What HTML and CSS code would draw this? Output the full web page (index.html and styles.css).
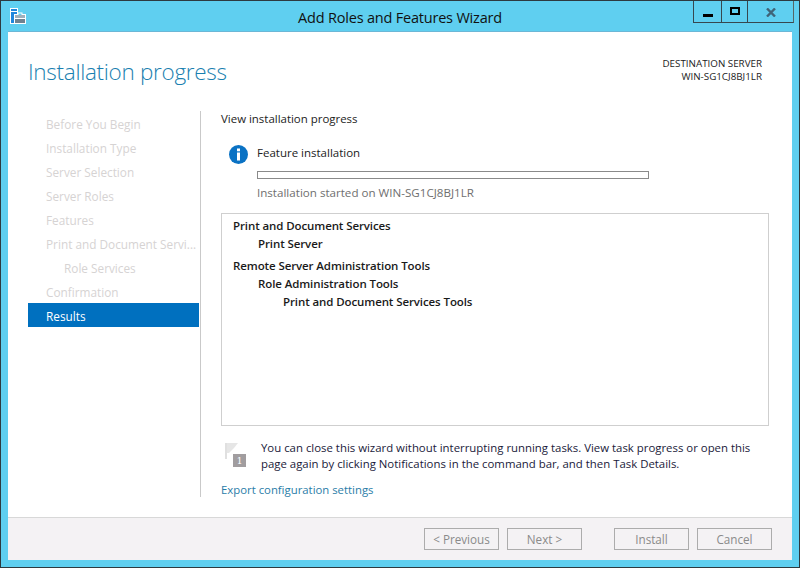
FILE: index.html
```html
<!DOCTYPE html>
<html lang="en">
<head>
<meta charset="utf-8">
<title>Add Roles and Features Wizard</title>
<link rel="stylesheet" href="styles.css">
</head>
<body>
<div class="window">
  <header class="titlebar">
    <svg class="app-icon" width="17" height="16" viewBox="0 0 17 16">
      <rect x="0" y="0" width="8" height="16" fill="#fff"/>
      <rect x="1" y="1" width="6" height="2" fill="#1f86dc"/>
      <rect x="1" y="4" width="6" height="11" fill="#1f86dc"/>
      <path d="M4 6h3.500V4.500h5V6H16v10H4z" fill="#fff"/>
      <rect x="8.500" y="5.500" width="3" height="1.500" fill="#5fcff0"/>
      <rect x="5" y="7" width="10" height="3" fill="#9fb0bc"/>
      <rect x="5" y="11" width="10" height="4" fill="#6f8290"/>
    </svg>
    <div class="title">Add Roles and Features Wizard</div>
    <div class="controls">
      <div class="ctl ctl-min"><span class="min-glyph"></span></div>
      <div class="ctl ctl-max"><span class="max-glyph"></span></div>
      <div class="ctl ctl-close">
        <svg width="10" height="9" viewBox="0 0 10 9"><path d="M1 .5 9 8.500M9 .5 1 8.500" stroke="#3f6478" stroke-width="2.400" fill="none"/></svg>
      </div>
    </div>
  </header>
  <div class="client">
    <div class="head">
      <h1 class="page-title">Installation progress</h1>
      <div class="dest">
        <div>DESTINATION SERVER</div>
        <div>WIN-SG1CJ8BJ1LR</div>
      </div>
    </div>
    <div class="main">
      <nav class="nav">
        <div class="nav-item">Before You Begin</div>
        <div class="nav-item">Installation Type</div>
        <div class="nav-item">Server Selection</div>
        <div class="nav-item">Server Roles</div>
        <div class="nav-item">Features</div>
        <div class="nav-item">Print and Document Servi...</div>
        <div class="nav-item nav-sub">Role Services</div>
        <div class="nav-item">Confirmation</div>
        <div class="nav-item nav-active">Results</div>
      </nav>
      <section class="content">
        <div class="view-label">View installation progress</div>
        <div class="status">
          <svg class="info" width="19" height="19" viewBox="0 0 19 19">
            <circle cx="9.500" cy="9.500" r="9.500" fill="#0a72c4"/>
            <rect x="8" y="3.500" width="3" height="2.800" fill="#fff"/>
            <rect x="8" y="7.500" width="3" height="8" fill="#fff"/>
          </svg>
          <div class="status-body">
            <div class="status-name">Feature installation</div>
            <div class="progress"></div>
            <div class="status-note">Installation started on WIN-SG1CJ8BJ1LR</div>
          </div>
        </div>
        <div class="results">
          <div class="r0">Print and Document Services</div>
          <div class="r1">Print Server</div>
          <div class="r0 r-gap">Remote Server Administration Tools</div>
          <div class="r1">Role Administration Tools</div>
          <div class="r2">Print and Document Services Tools</div>
        </div>
        <div class="notice">
          <svg class="flag" width="24" height="29" viewBox="0 0 24 29">
            <rect x="1" y="1" width="2" height="16" fill="#e0e0e0"/>
            <path d="M3 1h11l-4 5-5 5H3z" fill="#e6e6e6"/>
            <rect x="9" y="12" width="13" height="13" fill="#a19d9f"/>
          </svg>
          <span class="flag-num">1</span>
          <p class="notice-text">You can close this wizard without interrupting running tasks. View task progress or open this page again by clicking Notifications in the command bar, and then Task Details.</p>
        </div>
        <div class="export">Export configuration settings</div>
      </section>
    </div>
    <footer class="footer">
      <div class="btn">&lt; Previous</div>
      <div class="btn btn-next">Next &gt;</div>
      <div class="btn">Install</div>
      <div class="btn">Cancel</div>
    </footer>
  </div>
</div>
</body>
</html>
```
FILE: styles.css
```css
* { box-sizing: border-box; }
html, body { margin: 0; padding: 0; }
body {
  width: 800px;
  height: 568px;
  overflow: hidden;
  font-family: "Open Sans", "Liberation Sans", sans-serif;
  font-size: 11.500px;
  color: #1e1e1e;
}
.window {
  width: 800px;
  height: 568px;
  display: flex;
  flex-direction: column;
  background: #5fcff0;
  border: 1px solid #2d3a40;
  padding: 0 7px 7px 7px;
}
.titlebar {
  height: 31px;
  display: flex;
  position: relative;
  flex: none;
}
.app-icon { position: absolute; left: 2px; top: 7px; }
.title {
  width: 100%;
  text-align: center;
  font-size: 14.500px;
  line-height: 33px;
  color: #111;
  letter-spacing: -.2px;
}
.controls {
  position: absolute;
  right: -2px;
  top: 0;
  height: 22px;
  display: flex;
  border: 1px solid #37474f;
  border-top: 0;
  border-right-color: #566;
}
.ctl { display: flex; align-items: center; justify-content: center; }
.ctl-min { width: 28px; border-right: 1px solid #37474f; }
.ctl-max { width: 26px; border-right: 1px solid #37474f; }
.ctl-close { width: 45px; padding-top: 1px; }
.min-glyph { width: 10px; height: 3px; background: #000; margin-top: 7px; }
.max-glyph { width: 10px; height: 8px; border: 2px solid #000; margin-top: -1px; }
.client {
  flex: 1;
  display: flex;
  flex-direction: column;
  background: #fff;
  box-shadow: 0 -1px 0 #6cb7d6;
  min-height: 0;
}
.head {
  height: 79px;
  flex: none;
  padding: 0 30px 0 20px;
  display: flex;
  justify-content: space-between;
}
.page-title {
  margin: 23px 0 0;
  font-size: 22.500px;
  font-weight: 300;
  line-height: 34px;
  color: #1a7fb0;
  letter-spacing: -.3px;
}
.dest {
  margin-top: 25px;
  text-align: right;
  font-size: 9.800px;
  line-height: 13px;
  color: #222;
}
.main { flex: 1; display: flex; min-height: 0; }
.nav {
  width: 192px;
  flex: none;
  padding: 0 0 0 20px;
}
.nav-item {
  height: 24px;
  line-height: 26px;
  width: 171px;
  padding-left: 18px;
  font-size: 11.800px;
  color: #d6d3d3;
  white-space: nowrap;
  overflow: hidden;
}
.nav-sub { padding-left: 36px; }
.nav-active { background: #0070bf; color: #fff; }
.content {
  flex: none;
  width: 569px;
  border-left: 1px solid #c9c9c9;
  margin-bottom: 20px;
  padding-left: 20px;
  display: flex;
  flex-direction: column;
}
.view-label { line-height: 16px; color: #222; font-size: 11.450px; }
.status { display: flex; margin-top: 17px; padding-left: 8px; }
.info { flex: none; margin-top: 1px; }
.status-body { margin-left: 9px; }
.status-name { line-height: 16px; color: #222; margin-top: 1px; }
.progress {
  width: 392px;
  height: 8px;
  background: #fff;
  border: 1px solid #8a8a8a;
  margin-top: 10px;
}
.status-note { line-height: 16px; color: #6f6f6f; margin-top: 6px; font-size: 11.600px; }
.results {
  margin-top: 12px;
  width: 548px;
  height: 213px;
  flex: none;
  border: 1px solid #cfcfcf;
  padding: 3px 0 0 11px;
  font-weight: 600;
  letter-spacing: -.1px;
  color: #1a1a1a;
}
.results div { line-height: 18px; }
.r1 { padding-left: 25px; }
.r2 { padding-left: 50px; }
.r-gap { margin-top: 4px; }
.notice { display: flex; margin-top: 14px; position: relative; }
.flag { flex: none; margin: 2px 0 0 3px; }
.flag-num {
  position: absolute;
  left: 12px;
  top: 15px;
  width: 13px;
  text-align: center;
  font-family: "DejaVu Serif", serif;
  font-size: 9px;
  line-height: 13px;
  color: #fff;
}
.notice-text { margin: 0 0 0 13px; width: 510px; line-height: 16px; color: #1a1a3a; font-size: 11.400px; }
.export { margin-top: 10px; line-height: 16px; color: #2a7da8; font-size: 11.350px; }
.footer {
  height: 43px;
  flex: none;
  background: #f4f2f4;
  border-top: 1px solid #d8d8d8;
  display: flex;
  padding: 10px 20px 0 416px;
  gap: 8px;
}
.btn {
  width: 75px;
  height: 22px;
  border: 1px solid #acacac;
  background: #f4f2f4;
  text-align: center;
  line-height: 20px;
  font-size: 11.700px;
  color: #8a8a8a;
}
.btn-next { margin-right: 24px; }
```
